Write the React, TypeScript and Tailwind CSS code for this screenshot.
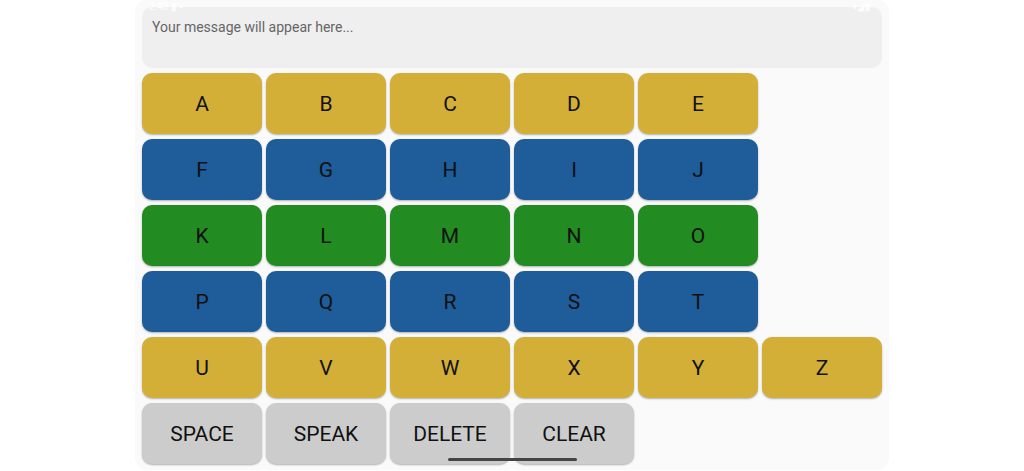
const rows: { keys: string[]; color: string }[] = [
  { keys: ['A', 'B', 'C', 'D', 'E'], color: 'bg-[#d4af37]' },
  { keys: ['F', 'G', 'H', 'I', 'J'], color: 'bg-[#1e5c9a]' },
  { keys: ['K', 'L', 'M', 'N', 'O'], color: 'bg-[#228b22]' },
  { keys: ['P', 'Q', 'R', 'S', 'T'], color: 'bg-[#1e5c9a]' },
  { keys: ['U', 'V', 'W', 'X', 'Y', 'Z'], color: 'bg-[#d4af37]' },
  { keys: ['SPACE', 'SPEAK', 'DELETE', 'CLEAR'], color: 'bg-[#cccccc]' },
];

const Key = ({ label, color }: { label: string; color: string }) => (
  <button
    className={`${color} w-[120px] h-[61px] pt-[2px] rounded-[10px] shadow-[0_1px_2px_rgba(0,0,0,0.3)] flex items-center justify-center text-[21px] text-[#111]`}
  >
    {label}
  </button>
);

export default function App() {
  return (
    <div className="w-[1024px] h-[471px] bg-white flex justify-center overflow-hidden" style={{ fontFamily: 'Roboto, "Liberation Sans", sans-serif' }}>
      <div className="relative w-[754px] h-[470px] bg-[#fafafa] rounded-[12px] px-[7px] pt-[7px]">
        <div className="absolute top-0 left-[14px] text-[10px] leading-[14px] text-white/80">2:48 ▮ ▪</div>
        <div className="absolute top-0 right-[18px] text-[10px] leading-[14px] text-white/80">▾◢▮</div>
        <div className="w-[740px] h-[61px] rounded-[10px] bg-[#efefef] px-[10px] pt-[10px] text-[14px] leading-[20px] text-[#666]">
          Your message will appear here...
        </div>
        <div className="flex flex-col gap-[5px] mt-[5px]">
          {rows.map((row, i) => (
            <div key={i} className="flex gap-[4px]">
              {row.keys.map((k) => (
                <Key key={k} label={k} color={row.color} />
              ))}
            </div>
          ))}
        </div>
        <div className="absolute left-[313px] bottom-[9px] w-[129px] h-[3px] rounded-full bg-[#444]" />
      </div>
    </div>
  );
}
